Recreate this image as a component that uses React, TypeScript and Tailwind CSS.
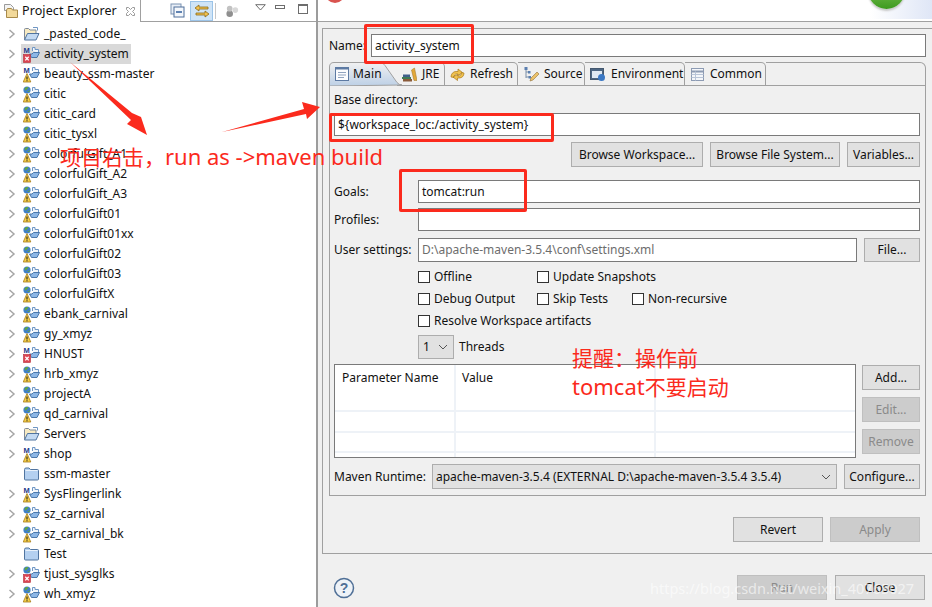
import React from 'react';

type IconKind = 'web-warn' | 'web-err' | 'mvn-warn' | 'mvn-err' | 'open' | 'closed';

const projects: { name: string; kind: IconKind; noArrow?: boolean; selected?: boolean }[] = [
  { name: '_pasted_code_', kind: 'open' },
  { name: 'activity_system', kind: 'mvn-err', selected: true },
  { name: 'beauty_ssm-master', kind: 'mvn-warn' },
  { name: 'citic', kind: 'web-warn' },
  { name: 'citic_card', kind: 'web-warn' },
  { name: 'citic_tysxl', kind: 'web-warn' },
  { name: 'colorfulGift_A1', kind: 'web-warn' },
  { name: 'colorfulGift_A2', kind: 'web-warn' },
  { name: 'colorfulGift_A3', kind: 'web-warn' },
  { name: 'colorfulGift01', kind: 'web-warn' },
  { name: 'colorfulGift01xx', kind: 'web-warn' },
  { name: 'colorfulGift02', kind: 'web-warn' },
  { name: 'colorfulGift03', kind: 'web-warn' },
  { name: 'colorfulGiftX', kind: 'web-warn' },
  { name: 'ebank_carnival', kind: 'web-warn' },
  { name: 'gy_xmyz', kind: 'web-warn' },
  { name: 'HNUST', kind: 'mvn-err' },
  { name: 'hrb_xmyz', kind: 'web-warn' },
  { name: 'projectA', kind: 'web-warn' },
  { name: 'qd_carnival', kind: 'web-warn' },
  { name: 'Servers', kind: 'open' },
  { name: 'shop', kind: 'mvn-warn' },
  { name: 'ssm-master', kind: 'closed', noArrow: true },
  { name: 'SysFlingerlink', kind: 'mvn-warn' },
  { name: 'sz_carnival', kind: 'web-warn' },
  { name: 'sz_carnival_bk', kind: 'web-warn' },
  { name: 'Test', kind: 'closed', noArrow: true },
  { name: 'tjust_sysglks', kind: 'web-err' },
  { name: 'wh_xmyz', kind: 'web-warn' },
];

// tree node icon: folder plus the little nature / problem decorators
const ProjectIcon = ({ kind }: { kind: IconKind }) => {
  if (kind === 'closed') {
    return (
      <svg width="17" height="17" viewBox="0 0 17 17">
        <path d="M1.500 3.500q0-1.500 1.500-1.500h3l1.500 1.500h7q1 0 1 1v8.500q0 1-1 1h-12q-1 0-1-1z" fill="#b4d0f0" stroke="#50749f" />
        <path d="M2.500 4.500h12" stroke="#e8f1fb" />
      </svg>
    );
  }
  if (kind === 'open') {
    return (
      <svg width="17" height="17" viewBox="0 0 17 17">
        <path d="M1.500 13.500V3.500q0-1 1-1h3l1.500 1.500h6v3" fill="#f7eac2" stroke="#7f8a99" />
        <path d="M1.500 14l3-6.500h11.500l-3 6.500z" fill="#c2d9f2" stroke="#50749f" />
        <path d="M10 1.500h4.500v3" fill="none" stroke="#6f96c4" />
      </svg>
    );
  }
  const isMaven = kind.startsWith('mvn');
  const isErr = kind.endsWith('err');
  return (
    <svg width="17" height="17" viewBox="0 0 17 17">
      <path d="M9.500 5V1.500h2.500v2h3.500V7" fill="#f3f7fc" stroke="#6f96c4" />
      <path d="M6.500 8h2.500l1.500-1.500h6L14 11.500H8.500z" fill="#8db7e6" stroke="#3f6da3" strokeWidth=".9" />
      {isMaven ? (
        <text x="0.500" y="6.500" fontSize="7.500" fontWeight="700" fill="#1f3a8a" fontFamily="Liberation Sans, sans-serif">M</text>
      ) : (
        <>
          <circle cx="4" cy="4" r="3.600" fill="#3f7fc8" />
          <path d="M1.500 2.500c1-1.500 3-2 4-1-.5 1.500-1.500 1-2 2.500-.5 1-1.500.5-2-1.500z" fill="#62a543" />
          <path d="M4.500 6c.5-1 1.500-1.500 2.500-1.500-.2 1-1 1.800-2.500 1.500z" fill="#62a543" />
        </>
      )}
      {isErr ? (
        <>
          <rect x="0.500" y="8.500" width="7" height="8" fill="#dc4452" stroke="#b52d3a" strokeWidth=".6" />
          <path d="M2.300 10.800l3.400 3.600M5.700 10.800l-3.400 3.600" stroke="#fff" strokeWidth="1.300" />
        </>
      ) : (
        <>
          <path d="M4 7.500l3.800 8.500H.2z" fill="#f7d046" stroke="#a67c1a" strokeWidth=".8" />
          <path d="M4 10.500v3M4 14.200v1" stroke="#222" strokeWidth="1.100" />
        </>
      )}
    </svg>
  );
};

const TreeRow = ({ name, kind, noArrow, selected }: (typeof projects)[number]) => (
  <div className="flex h-5 items-center">
    <div className="flex w-[21px] shrink-0 justify-center pl-[3px]">
      {!noArrow && (
        <svg width="8" height="10" viewBox="0 0 8 10">
          <path d="M1.500 1l4.500 4-4.500 4" fill="none" stroke="#a6a6a6" strokeWidth="1.500" />
        </svg>
      )}
    </div>
    <div className={`flex h-full items-center pr-[2px] ${selected ? 'bg-[#d9d9d9]' : ''}`}>
      <div className="flex w-[23px] shrink-0 justify-start pl-[2px]">
        <ProjectIcon kind={kind} />
      </div>
      <span>{name}</span>
    </div>
  </div>
);

const Explorer = () => (
  <div className="flex w-[316px] shrink-0 flex-col">
    <div className="flex h-[22px] shrink-0">
      <div className="flex w-[140px] items-center pl-[3px]">
        <svg className="shrink-0" width="16" height="16" viewBox="0 0 16 16">
          <path d="M1.500 1.500h6l3 3v3h-9z" fill="#f3f3f3" stroke="#9a9a9a" />
          <path d="M3.500 7v7.500h11V7h-5l-1-1.500h-4z" fill="#f2d99a" stroke="#a88a4a" />
        </svg>
        <span className="ml-[3px] text-[12.500px] tracking-[0.1px] whitespace-nowrap">Project Explorer</span>
        <svg className="ml-[8px] shrink-0" width="11" height="11" viewBox="0 0 11 11">
          <path d="M1.500 1.500l2 0 2 2 2-2 2 0 0 2-2 2 2 2 0 2-2 0-2-2-2 2-2 0 0-2 2-2-2-2z" fill="none" stroke="#9a9a9a" />
        </svg>
      </div>
      <div className="flex flex-1 items-center border-b border-l border-[#a0a0a0] pl-[29px]">
        <svg width="15" height="15" viewBox="0 0 15 15">
          <rect x="1" y="1" width="10" height="10" fill="#e8eef6" stroke="#7d93b2" />
          <rect x="4" y="4" width="10" height="10" fill="#f4f7fb" stroke="#4f6f9a" />
          <path d="M6 9h6" stroke="#2f5d9a" strokeWidth="1.500" />
        </svg>
        <div className="ml-[5px] flex h-[20px] w-[23px] items-center justify-center border border-[#9cc4e8] bg-[#cfe4f7]">
          <svg width="16" height="14" viewBox="0 0 16 14">
            <path d="M5 1L1 4l4 3V5h9V3H5zM11 7l4 3-4 3v-2H2V9h9z" fill="#f2c14e" stroke="#8a6a1a" strokeWidth=".8" />
          </svg>
        </div>
        <div className="ml-[2px] h-[16px] w-px bg-[#c8c8c8]" />
        <svg className="ml-[9px]" width="15" height="14" viewBox="0 0 16 14">
          <circle cx="5" cy="10" r="3.500" fill="#8f8f8f" />
          <circle cx="5" cy="4.500" r="3" fill="#c2c2c2" />
          <circle cx="11" cy="6" r="3" fill="#d8d8d8" />
        </svg>
        <svg className="mb-[6px] ml-[15px]" width="11" height="7" viewBox="0 0 11 7">
          <path d="M.700.700h9.600L5.500 6z" fill="#fff" stroke="#6d6d6d" />
        </svg>
        <div className="mb-[8px] ml-[9px] h-[4px] w-[10px] border border-[#6d6d6d]" />
        <div className="mb-[4px] ml-[13px] h-[10px] w-[10px] border border-t-2 border-[#6d6d6d]" />
      </div>
    </div>
    <div className="mt-[2px] flex-1 overflow-hidden">
      {projects.map((p) => (
        <TreeRow key={p.name} {...p} />
      ))}
    </div>
  </div>
);

const Field = ({ className = '', children, disabled }: { className?: string; children?: React.ReactNode; disabled?: boolean }) => (
  <div className={`flex items-center border border-[#7a7a7a] bg-white pl-[3px] ${disabled ? 'text-[#6d6d6d]' : ''} ${className}`}>{children}</div>
);

const Btn = ({ label, className = '', disabled }: { label: string; className?: string; disabled?: boolean }) => (
  <div
    className={`flex shrink-0 items-center justify-center border ${
      disabled ? 'border-[#bfbfbf] bg-[#cccccc] text-[#8a8a8a]' : 'border-[#adadad] bg-[#e1e1e1]'
    } ${className}`}
  >
    {label}
  </div>
);

const Check = ({ label, className = '' }: { label: string; className?: string }) => (
  <div className={`flex items-center ${className}`}>
    <div className="h-[12px] w-[12px] shrink-0 border border-[#333] bg-white" />
    <span className="ml-[4px] whitespace-nowrap">{label}</span>
  </div>
);

const Chevron = () => (
  <svg width="10" height="6" viewBox="0 0 10 6">
    <path d="M1 1l4 4 4-4" fill="none" stroke="#555" />
  </svg>
);

const tabs: { label: string; width: string; icon: React.ReactNode }[] = [
  {
    label: 'JRE',
    width: 'w-[48px]',
    icon: (
      <svg width="15" height="15" viewBox="0 0 15 15">
        <path d="M0 10h9v2H0z" fill="#3f7a55" />
        <path d="M1 12h9v2.500H1z" fill="#8a5a3a" />
        <path d="M1 7.500h7V10H1z" fill="#3f5f8a" />
        <path d="M9.500 3l3-2 2.500 12.500h-3z" fill="#e3a93a" stroke="#9a7020" strokeWidth=".5" />
      </svg>
    ),
  },
  {
    label: 'Refresh',
    width: 'w-[73px]',
    icon: (
      <svg width="15" height="15" viewBox="0 0 15 15">
        <path d="M1 10c0-3 2-5.500 5-5.500h2V2l4.500 3.500L8 8.500V7H6.500C5 7 4 8.500 4 10.500z" fill="#f0c24e" stroke="#a9791c" strokeWidth=".7" />
        <path d="M14 6c0 3-2 5-5 5H7.500v2.500L3 10l4.500-2.500V9H9c1.500 0 2.500-1.500 2.500-3.500z" fill="#f0c24e" stroke="#a9791c" strokeWidth=".7" />
      </svg>
    ),
  },
  {
    label: 'Source',
    width: 'w-[67px]',
    icon: (
      <svg width="16" height="15" viewBox="0 0 16 15">
        <path d="M3 1.500V11M3 5h2.500M3 10h3" stroke="#7b8fa8" fill="none" />
        <rect x="1.500" y="0" width="3" height="3" fill="#5b7fb0" />
        <rect x="5" y="4" width="2.500" height="2.500" fill="#5b7fb0" />
        <rect x="5.500" y="9" width="2.500" height="2.500" fill="#5b7fb0" />
        <path d="M7 14l1-3 6-6 2 2-6 6z" fill="#ecc26a" stroke="#94723a" strokeWidth=".6" />
      </svg>
    ),
  },
  {
    label: 'Environment',
    width: 'w-[100px]',
    icon: (
      <svg width="16" height="15" viewBox="0 0 16 15">
        <rect x="0.500" y="1.500" width="13" height="11" fill="#4d6683" stroke="#44586f" />
        <rect x="2" y="4" width="10" height="7" fill="#dfe8f2" />
        <circle cx="11.500" cy="10.500" r="3.500" fill="#3b78c4" />
      </svg>
    ),
  },
  {
    label: 'Common',
    width: 'w-[81px]',
    icon: (
      <svg width="15" height="15" viewBox="0 0 15 15">
        <rect x="1.500" y="1.500" width="12" height="12" fill="#f4f6fa" stroke="#8d9bb3" />
        <path d="M1.500 4.500h12" stroke="#8d9bb3" strokeWidth="2" />
        <path d="M1.500 7.500h12M1.500 10.500h12M5.500 4.500v9" stroke="#b9c5d8" />
      </svg>
    ),
  },
];

const TabBar = () => (
  <div className="flex h-[24px] shrink-0">
    <div className="relative flex w-[68px] items-center pl-[5px]">
      <svg className="absolute inset-0" width="76" height="24" viewBox="0 0 76 24">
        <defs>
          <linearGradient id="mainTab" x1="0" y1="0" x2="0" y2="1">
            <stop offset="0" stopColor="#f1f1f1" />
            <stop offset="1" stopColor="#bdd0e6" />
          </linearGradient>
        </defs>
        <path d="M.500 24V5q0-4.500 4.500-4.500h46q3 0 5 3l12 17q2 2.500 5 2.500z" fill="url(#mainTab)" stroke="#a0a0a0" />
      </svg>
      <svg className="relative" width="16" height="16" viewBox="0 0 16 16">
        <rect x="1.500" y="1.500" width="13" height="13" fill="#fbfcfe" stroke="#5d7aa3" />
        <path d="M1.500 2.500h13" stroke="#5d7aa3" strokeWidth="2" />
        <path d="M4 6.500h8M4 9h8M4 11.500h6" stroke="#8fa3bf" />
      </svg>
      <span className="relative ml-[3px] tracking-[0.2px]">Main</span>
    </div>
    {tabs.map((t) => (
      <div key={t.label} className={`flex ${t.width} items-center gap-[5px] rounded-tr-[5px] border-t border-r border-b border-[#a0a0a0] pl-[5px]`}>
        {t.icon}
        <span>{t.label}</span>
      </div>
    ))}
    <div className="flex-1 rounded-tr-[6px] border-t border-r border-b border-[#a0a0a0]" />
  </div>
);

const ParamTable = () => (
  <div className="h-[94px] w-[522px] shrink-0 border border-[#7a7a7a] bg-white">
    <div className="grid h-[47px] grid-cols-[121px_200px_1fr] border-b-2 border-[#eef2f7]">
      <div className="border-r-2 border-[#eef2f7] pt-[4px] pl-[7px]">Parameter Name</div>
      <div className="border-r-2 border-[#eef2f7] pt-[4px] pl-[6px]">Value</div>
      <div />
    </div>
    {['h-[21px] border-b-2', 'h-[20px] border-b-2', 'h-[4px]'].map((row) => (
      <div key={row} className={`grid ${row} grid-cols-[121px_200px_1fr] border-[#eef2f7]`}>
        <div className="border-r-2 border-[#eef2f7]" />
        <div className="border-r-2 border-[#eef2f7]" />
        <div />
      </div>
    ))}
  </div>
);

const MainPanel = () => (
  <div className="flex h-[410px] flex-col border-x border-b border-[#a0a0a0] pr-[5px] pl-[4px]">
    <div className="mt-[6px] h-[16px] leading-[16px]">Base directory:</div>
    <Field className="mt-[5px] h-[23px]">{'${workspace_loc:/activity_system}'}</Field>
    <div className="mt-[6px] flex h-[25px] justify-end gap-[7px]">
      <Btn label="Browse Workspace..." className="w-[132px]" />
      <Btn label="Browse File System..." className="w-[130px]" />
      <Btn label="Variables..." className="w-[73px]" />
    </div>
    <div className="mt-[13px] flex h-[23px] items-center">
      <span className="w-[84px] shrink-0">Goals:</span>
      <Field className="h-full flex-1">tomcat:run</Field>
    </div>
    <div className="mt-[5px] flex h-[23px] items-center">
      <span className="w-[84px] shrink-0">Profiles:</span>
      <Field className="h-full flex-1" />
    </div>
    <div className="mt-[7px] flex h-[24px] items-center">
      <span className="w-[84px] shrink-0">User settings:</span>
      <Field disabled className="h-full flex-1">{'D:\\apache-maven-3.5.4\\conf\\settings.xml'}</Field>
      <Btn label="File..." className="ml-[7px] h-full w-[56px]" />
    </div>
    <div className="mt-[4px] ml-[84px] grid auto-rows-[22px] grid-cols-[119px_95px_1fr] items-center">
      <Check label="Offline" />
      <Check label="Update Snapshots" className="col-span-2" />
      <Check label="Debug Output" />
      <Check label="Skip Tests" />
      <Check label="Non-recursive" />
      <Check label="Resolve Workspace artifacts" className="col-span-3" />
    </div>
    <div className="mt-[3px] ml-[84px] flex h-[24px] items-center">
      <div className="flex h-full w-[36px] items-center justify-between border border-[#adadad] bg-[#e1e1e1] pr-[5px] pl-[4px]">
        1
        <Chevron />
      </div>
      <span className="ml-[5px]">Threads</span>
    </div>
    <div className="mt-[5px] flex">
      <ParamTable />
      <div className="ml-[6px] flex flex-1 flex-col gap-[7px] pt-[1px]">
        <Btn label="Add..." className="h-[25px]" />
        <Btn disabled label="Edit..." className="h-[25px]" />
        <Btn disabled label="Remove" className="h-[25px]" />
      </div>
    </div>
    <div className="mt-[6px] flex h-[25px] items-center">
      <span className="w-[98px] shrink-0">Maven Runtime:</span>
      <div className="flex h-full w-[405px] items-center justify-between border border-[#adadad] bg-[#e1e1e1] pr-[5px] pl-[3px]">
        {'apache-maven-3.5.4 (EXTERNAL D:\\apache-maven-3.5.4 3.5.4)'}
        <Chevron />
      </div>
      <Btn label="Configure..." className="ml-[7px] h-full flex-1" />
    </div>
  </div>
);

const Dialog = () => (
  <div className="flex flex-1 flex-col border-l-2 border-[#9c9c9c] bg-[#f0f0f0]">
    <div className="relative h-[22px] shrink-0 overflow-hidden border-b border-[#a0a0a0] bg-white">
      <div className="absolute top-[-17px] left-[7px] h-5 w-5 rounded-full bg-[#d9534f]" />
      <div className="absolute top-0 right-0 h-[19px] w-[62px] bg-gradient-to-r from-white to-[#dfe6f6]" />
      <div className="absolute top-[-28px] left-[550px] h-[37px] w-[37px] rounded-full bg-gradient-to-b from-[#9ad86a] to-[#3c9a1e] shadow-[0_2px_2px_#c8c8c8]" />
    </div>
    <div className="mt-[6px] ml-[4px] flex h-[526px] flex-col border-y border-l border-[#a0a0a0] pl-[5px]">
      <div className="mt-[5px] flex h-[23px] items-center pr-[6px]">
        <span className="ml-px w-[42px]">Name:</span>
        <Field className="h-full flex-1">activity_system</Field>
      </div>
      <div className="mt-[5px] mr-[6px] flex flex-col pl-[1px]">
        <TabBar />
        <MainPanel />
      </div>
      <div className="mt-[21px] mr-[12px] flex justify-end gap-[7px]">
        <Btn label="Revert" className="h-[25px] w-[90px]" />
        <Btn disabled label="Apply" className="h-[25px] w-[90px]" />
      </div>
    </div>
    <div className="mt-[21px] flex items-center pr-[7px] pl-[15px]">
      <svg width="22" height="22" viewBox="0 0 22 22">
        <circle cx="11" cy="11" r="9.500" fill="#eef2f7" stroke="#4f6f96" strokeWidth="1.500" />
        <text x="11" y="16" textAnchor="middle" fontSize="14" fontWeight="700" fill="#4f6f96" fontFamily="Liberation Sans, sans-serif">?</text>
      </svg>
      <div className="ml-auto flex gap-[8px]">
        <Btn disabled label="Run" className="h-[25px] w-[90px]" />
        <Btn label="Close" className="h-[25px] w-[90px]" />
      </div>
    </div>
  </div>
);

// red notes drawn over the screenshot
const Annotations = () => (
  <>
    <div className="absolute top-[24px] left-[364px] h-[40px] w-[110px] rounded-[2px] border-[3px] border-[#fb2a1d]" />
    <div className="absolute top-[113px] left-[329px] h-[29px] w-[225px] rounded-[2px] border-[3px] border-[#fb2a1d]" />
    <div className="absolute top-[169px] left-[399px] h-[43px] w-[128px] rounded-[2px] border-[3px] border-[#fb2a1d]" />
    <svg className="absolute top-0 left-0" width="932" height="607" viewBox="0 0 932 607">
      <polygon points="70,62 132,113 141,117 147,135 127,124 131,120" fill="#fb2a1d" />
      <polygon points="222,132 304,109 302,102 320,107 307,119 306,114" fill="#fb2a1d" />
    </svg>
    <div className="absolute top-[141px] left-[60px] text-[21px] leading-[30px] whitespace-nowrap text-[#fb2a1d]">
      项目右击，<span className="text-[22px]">run as -&gt;maven build</span>
    </div>
    <div className="absolute top-[343px] left-[572px] text-[21px] leading-[30px] whitespace-nowrap text-[#fb2a1d]">提醒：操作前</div>
    <div className="absolute top-[371px] left-[572px] text-[21px] leading-[30px] whitespace-nowrap text-[#fb2a1d]">
      <span className="text-[22px]">tomcat</span>不要启动
    </div>
    <div className="absolute top-[578px] left-[650px] text-[14.500px] leading-[20px] whitespace-nowrap text-white/60">https://blog.csdn.net/weixin_40765027</div>
  </>
);

export default function App() {
  return (
    <div className="relative flex h-[607px] w-[932px] overflow-hidden bg-white font-['Noto_Sans','Noto_Sans_CJK_SC',sans-serif] text-[12px] text-[#111]">
      <Explorer />
      <Dialog />
      <Annotations />
    </div>
  );
}
